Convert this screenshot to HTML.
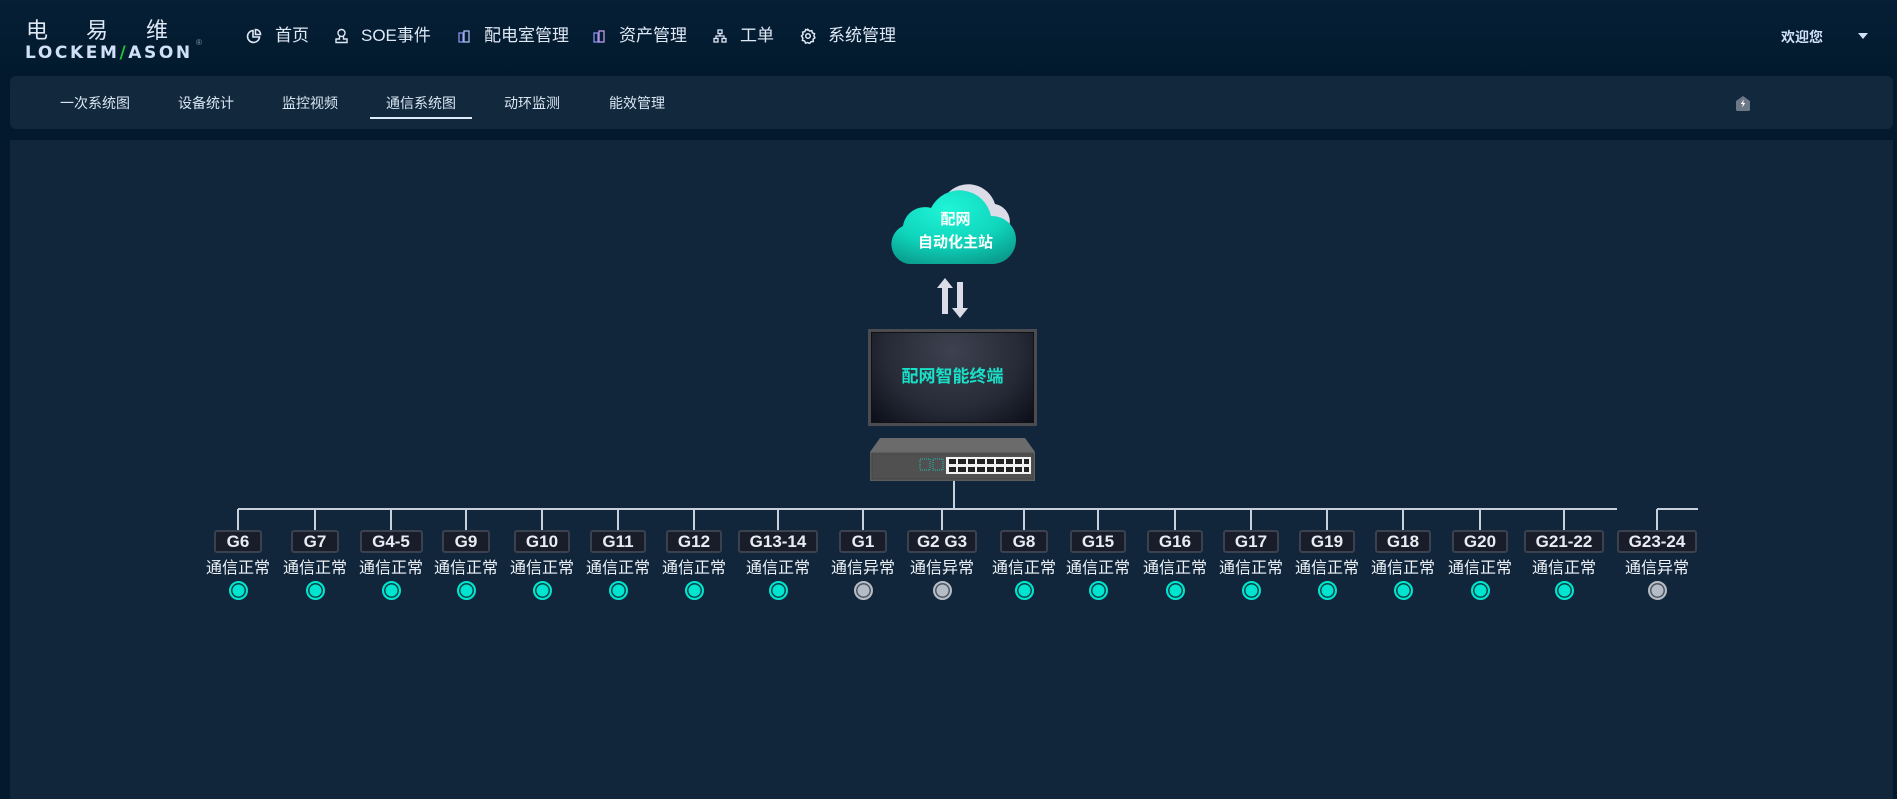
<!DOCTYPE html>
<html><head><meta charset="utf-8">
<style>
*{margin:0;padding:0;box-sizing:border-box}
body{width:1897px;height:799px;background:#031a2e;font-family:"Liberation Sans","Noto Sans CJK SC",sans-serif;position:relative;overflow:hidden;color:#dfe8f5}
.a{position:absolute;white-space:nowrap}
.hdr{left:0;top:0;width:1897px;height:76px;background:linear-gradient(#061f35,#021a2d)}
.nav{top:25px;font-size:17px;color:#dfe8f5;line-height:22px}
.sub{left:10px;top:76px;width:1883px;height:53px;background:#12283c;border-radius:6px}
.st{top:94px;font-size:14px;line-height:18px;color:#d8e6f5}
.main{left:10px;top:140px;width:1883px;height:659px;background:#11263b}
.box{top:530px;height:23px;background:#181d29;border:2px solid #3a4250;border-radius:3px;color:#e8ecf2;font-weight:bold;font-size:17px;line-height:19px;text-align:center}
.lbl{top:558px;font-size:16px;line-height:22px;color:#eef2f8;transform:translateX(-50%)}
.dot{top:581px;width:19px;height:19px;border-radius:50%}
.ok{background:#00e5cf;border:2px solid #00e5cf;box-shadow:inset 0 0 0 1.5px #0b3b40}
.bad{background:#b5bcc6;border:2px solid #b5bcc6;box-shadow:inset 0 0 0 1.5px #4a525d}
.v{width:2px;background:#c8d0dc;top:509px;height:21px}
</style></head><body>
<div class="a hdr"></div>
<div class="a" style="left:26px;top:13px;font-size:22px;color:#dfe8f5;letter-spacing:0">电<span style="margin-left:38px">易</span><span style="margin-left:38px">维</span></div>
<div class="a" style="left:25px;top:43px;font-size:17px;font-weight:bold;color:#cfe0f7;letter-spacing:2.6px;font-family:'DejaVu Sans',sans-serif">LOCKEM<span style="color:#22c33a">/</span>ASON</div>
<div class="a" style="left:196px;top:38px;font-size:8px;color:#8a9ab0">®</div>

<svg class="a" style="left:246px;top:28px" width="16" height="16" viewBox="0 0 16 16" fill="none" stroke="#dfe8f5" stroke-width="1.6"><path d="M7 2.5A6 6 0 1 0 13.5 9H7Z"/><path d="M9.5 1.5V6.5H14.5A5 5 0 0 0 9.5 1.5Z"/></svg>
<div class="a nav" style="left:275px">首页</div>
<svg class="a" style="left:334px;top:28px" width="15" height="16" viewBox="0 0 15 16" fill="none" stroke="#dfe8f5" stroke-width="1.4"><circle cx="7.5" cy="5" r="3.5"/><path d="M5.5 8.5V11H2v3.5h11V11H9.5V8.5"/></svg>
<div class="a nav" style="left:361px">SOE事件</div>
<svg class="a" style="left:458px;top:30px" width="12" height="13" viewBox="0 0 12 13"><rect x="1" y="3" width="4" height="9" fill="none" stroke="#8a8fe8" stroke-width="1.3"/><rect x="6" y="1" width="5" height="11" fill="none" stroke="#b0b8f0" stroke-width="1.3"/></svg>
<div class="a nav" style="left:484px">配电室管理</div>
<svg class="a" style="left:593px;top:30px" width="12" height="13" viewBox="0 0 12 13"><rect x="1" y="3" width="4" height="9" fill="none" stroke="#8a8fe8" stroke-width="1.3"/><rect x="6" y="1" width="5" height="11" fill="none" stroke="#c29ae8" stroke-width="1.3"/></svg>
<div class="a nav" style="left:619px">资产管理</div>
<svg class="a" style="left:713px;top:29px" width="14" height="14" viewBox="0 0 14 14" fill="none" stroke="#dfe8f5" stroke-width="1.3"><rect x="5" y="1" width="4" height="3.5"/><rect x="1" y="9.5" width="4" height="3.5"/><rect x="9" y="9.5" width="4" height="3.5"/><path d="M7 4.5V7H3v2.5M7 7h4v2.5"/></svg>
<div class="a nav" style="left:740px">工单</div>
<svg class="a" style="left:800px;top:28px" width="16" height="16" viewBox="0 0 16 16" fill="none" stroke="#dfe8f5" stroke-width="1.5"><circle cx="8" cy="8" r="2.3"/><path d="M8 1.5l1.6 1.6 2.2-.5.6 2.2 2.1.9-.6 2.2 1 1.9-1.8 1.4.2 2.3-2.3.2-1.4 1.8-1.9-1-2.2.6-.9-2.1-2.2-.6.5-2.2L1.5 8l1.6-1.6-.5-2.2 2.2-.6.9-2.1 2.2.6z"/></svg>
<div class="a nav" style="left:828px">系统管理</div>
<div class="a" style="left:1781px;top:27px;font-size:14px;font-weight:bold;color:#cfe0f7">欢迎您</div>
<div class="a" style="left:1858px;top:33px;width:0;height:0;border-left:5px solid transparent;border-right:5px solid transparent;border-top:6px solid #cfe0f7"></div>

<div class="a sub"></div>
<div class="a st" style="left:60px">一次系统图</div>
<div class="a st" style="left:178px">设备统计</div>
<div class="a st" style="left:282px">监控视频</div>
<div class="a st" style="left:386px">通信系统图</div>
<div class="a" style="left:370px;top:117px;width:102px;height:2px;background:#dceaf8"></div>
<div class="a st" style="left:504px">动环监测</div>
<div class="a st" style="left:609px">能效管理</div>
<svg class="a" style="left:1735px;top:95px" width="16" height="16" viewBox="0 0 16 16"><path d="M1 6L8 1l7 5v8.5a1.5 1.5 0 0 1-1.5 1.5h-11A1.5 1.5 0 0 1 1 14.5Z" fill="#6c7886"/><path d="M8.8 4.5L5.8 9h2l-.6 3.5L10.2 8h-2z" fill="#fff"/></svg>

<div class="a main"></div>

<svg class="a" style="left:885px;top:180px" width="140" height="90" viewBox="0 0 140 90">
<defs><radialGradient id="cg" cx="0.45" cy="0.25" r="0.8"><stop offset="0" stop-color="#1ff5d8"/><stop offset="0.6" stop-color="#0fd4bb"/><stop offset="1" stop-color="#0a9e8f"/></radialGradient></defs>
<path d="M62 14a28 28 0 0 1 48 10a18 18 0 0 1 10 30a16 16 0 0 1-12 24H70Z" fill="#dcdce8"/>
<path d="M24 84a20 20 0 0 1-6-38a22 22 0 0 1 28-18a32 32 0 0 1 60 8a22 22 0 0 1 2 48Z" fill="url(#cg)"/>
</svg>
<div class="a" style="left:889px;top:208px;width:133px;text-align:center;font-size:15px;font-weight:bold;color:#fff;line-height:23px">配网<br>自动化主站</div>
<svg class="a" style="left:936px;top:278px" width="34" height="40" viewBox="0 0 34 40"><path d="M9 0L17 10H12V36H6V10H1Z" fill="#dcdce8"/><path d="M21 4H27V30H32L24 40L16 30H21Z" fill="#dcdce8"/></svg>
<div class="a" style="left:868px;top:329px;width:169px;height:97px;background:#4a4c52;padding:3px"><div style="width:100%;height:100%;border:1px solid #111;background:radial-gradient(ellipse at 50% 20%,#3d4250,#262a36 60%,#0b0e18);text-align:center;line-height:88px;font-size:17px;font-weight:bold;color:#19e0c8">配网智能终端</div></div>
<svg class="a" style="left:870px;top:438px" width="165" height="43" viewBox="0 0 165 43">
<path d="M10 0H155L165 14H0Z" fill="#6b6b6b"/><rect x="0" y="14" width="165" height="29" fill="#5c5c5c"/><rect x="2" y="16" width="161" height="25" fill="#505050" stroke="#444"/>
<rect x="50" y="21" width="10" height="11" fill="none" stroke="#1ec0b0" stroke-dasharray="1 1"/><rect x="63" y="21" width="10" height="11" fill="none" stroke="#1ec0b0" stroke-dasharray="1 1"/>
<rect x="76" y="19" width="85" height="17" fill="#f2f2f2"/>
<g fill="#222"><rect x="79" y="21" width="80" height="5" /><rect x="79" y="29" width="80" height="5"/></g>
<g fill="#f2f2f2"><rect x="86" y="21" width="2" height="13"/><rect x="96" y="21" width="2" height="13"/><rect x="105" y="21" width="2" height="13"/><rect x="115" y="21" width="2" height="13"/><rect x="124" y="21" width="2" height="13"/><rect x="134" y="21" width="2" height="13"/><rect x="143" y="21" width="2" height="13"/><rect x="152" y="21" width="2" height="13"/></g>
</svg>
<div class="a" style="left:953px;top:481px;width:2px;height:28px;background:#c8d0dc"></div>
<div class="a" style="left:238px;top:508px;width:1379px;height:2px;background:#c8d0dc"></div>
<div class="a" style="left:1657px;top:508px;width:41px;height:2px;background:#c8d0dc"></div>

<div id="n"></div>
<script>
var d=[[238,"G6",48,1],[315,"G7",48,1],[391,"G4-5",63,1],[466,"G9",48,1],[542,"G10",56,1],[618,"G11",56,1],[694,"G12",56,1],[778,"G13-14",80,1],[863,"G1",48,0],[942,"G2 G3",70,0],[1024,"G8",48,1],[1098,"G15",56,1],[1175,"G16",56,1],[1251,"G17",56,1],[1327,"G19",56,1],[1403,"G18",56,1],[1480,"G20",56,1],[1564,"G21-22",80,1],[1657,"G23-24",80,0]];
var h="";d.forEach(function(e){var x=e[0];
h+='<div class="a v" style="left:'+(x-1)+'px"></div>';
h+='<div class="a box" style="left:'+(x-e[2]/2)+'px;width:'+e[2]+'px">'+e[1]+'</div>';
h+='<div class="a lbl" style="left:'+x+'px">'+(e[3]?'通信正常':'通信异常')+'</div>';
h+='<div class="a dot '+(e[3]?'ok':'bad')+'" style="left:'+(x-9.5)+'px"></div>';});
document.getElementById("n").innerHTML=h;
</script>
</body></html>
